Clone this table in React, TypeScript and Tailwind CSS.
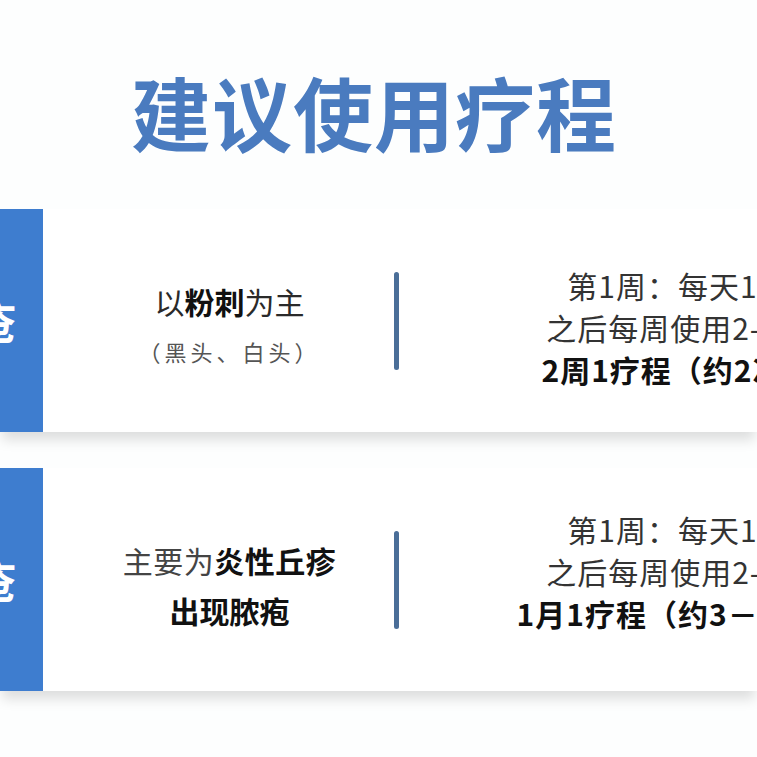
import React from "react";

type Course = {
  tag: string;
  middle: React.ReactNode;
  lines: string[];
  bold: string;
  rightClass: string;
};

const courses: Course[] = [
  {
    tag: "轻度痤疮",
    middle: (
      <>
        <p className="text-[30px] leading-[50px] text-[#2a2a2a]">
          以<span className="font-bold text-[#111]">粉刺</span>为主
        </p>
        <p className="text-[22px] leading-[50px] tracking-[4px] text-[#555]">（黑头、白头）</p>
      </>
    ),
    lines: ["第1周：每天1次", "之后每周使用2-3次"],
    bold: "2周1疗程（约2次）",
    rightClass: "pt-[12px]",
  },
  {
    tag: "中度痤疮",
    middle: (
      <>
        <p className="text-[30px] leading-[50px] tracking-[0.5px] text-[#444]">
          主要为<span className="font-bold text-[#111]">炎性丘疹</span>
        </p>
        <p className="text-[30px] leading-[50px] font-bold text-[#111]">出现脓疱</p>
      </>
    ),
    lines: ["第1周：每天1次", "之后每周使用2-3次"],
    bold: "1月1疗程（约3－4次）",
    rightClass: "pb-[18px]",
  },
];

const CourseCard = ({ item }: { item: Course }) => (
  <div className="flex items-stretch h-[223px] bg-white shadow-[0_10px_12px_-2px_rgba(0,0,0,0.13)]">
    <div className="w-[200px] ml-[-157px] shrink-0 bg-[#3e7dcf] flex items-center justify-end pr-[27px]">
      <span className="text-[44px] font-bold text-white whitespace-nowrap">{item.tag}</span>
    </div>
    <div className="w-[351px] shrink-0 pl-[22px] pt-[10px] flex flex-col items-center justify-center">
      {item.middle}
    </div>
    <div className="flex items-center">
      <div className="w-[5px] h-[98px] rounded-full bg-[#4a6e98]" />
    </div>
    <div
      className={`w-[558px] shrink-0 flex flex-col items-center justify-center text-[30px] leading-[42px] tracking-[1px] whitespace-nowrap ${item.rightClass}`}
    >
      {item.lines.map((l) => (
        <p key={l} className="text-[#333]">
          {l}
        </p>
      ))}
      <p className="font-bold text-[#111]">{item.bold}</p>
    </div>
  </div>
);

export default function App() {
  return (
    <div
      className="w-[757px] h-[757px] overflow-hidden bg-[#fdfefe]"
      style={{ fontFamily: '"Noto Sans CJK SC", "Noto Sans", sans-serif' }}
    >
      <h1 className="mt-[70px] pr-[9px] text-center text-[80px] leading-[80px] tracking-[1px] font-bold text-[#4a7bbf]">
        建议使用疗程
      </h1>
      <div className="mt-[59px] flex flex-col gap-[36px]">
        {courses.map((c) => (
          <CourseCard key={c.tag} item={c} />
        ))}
      </div>
    </div>
  );
}
